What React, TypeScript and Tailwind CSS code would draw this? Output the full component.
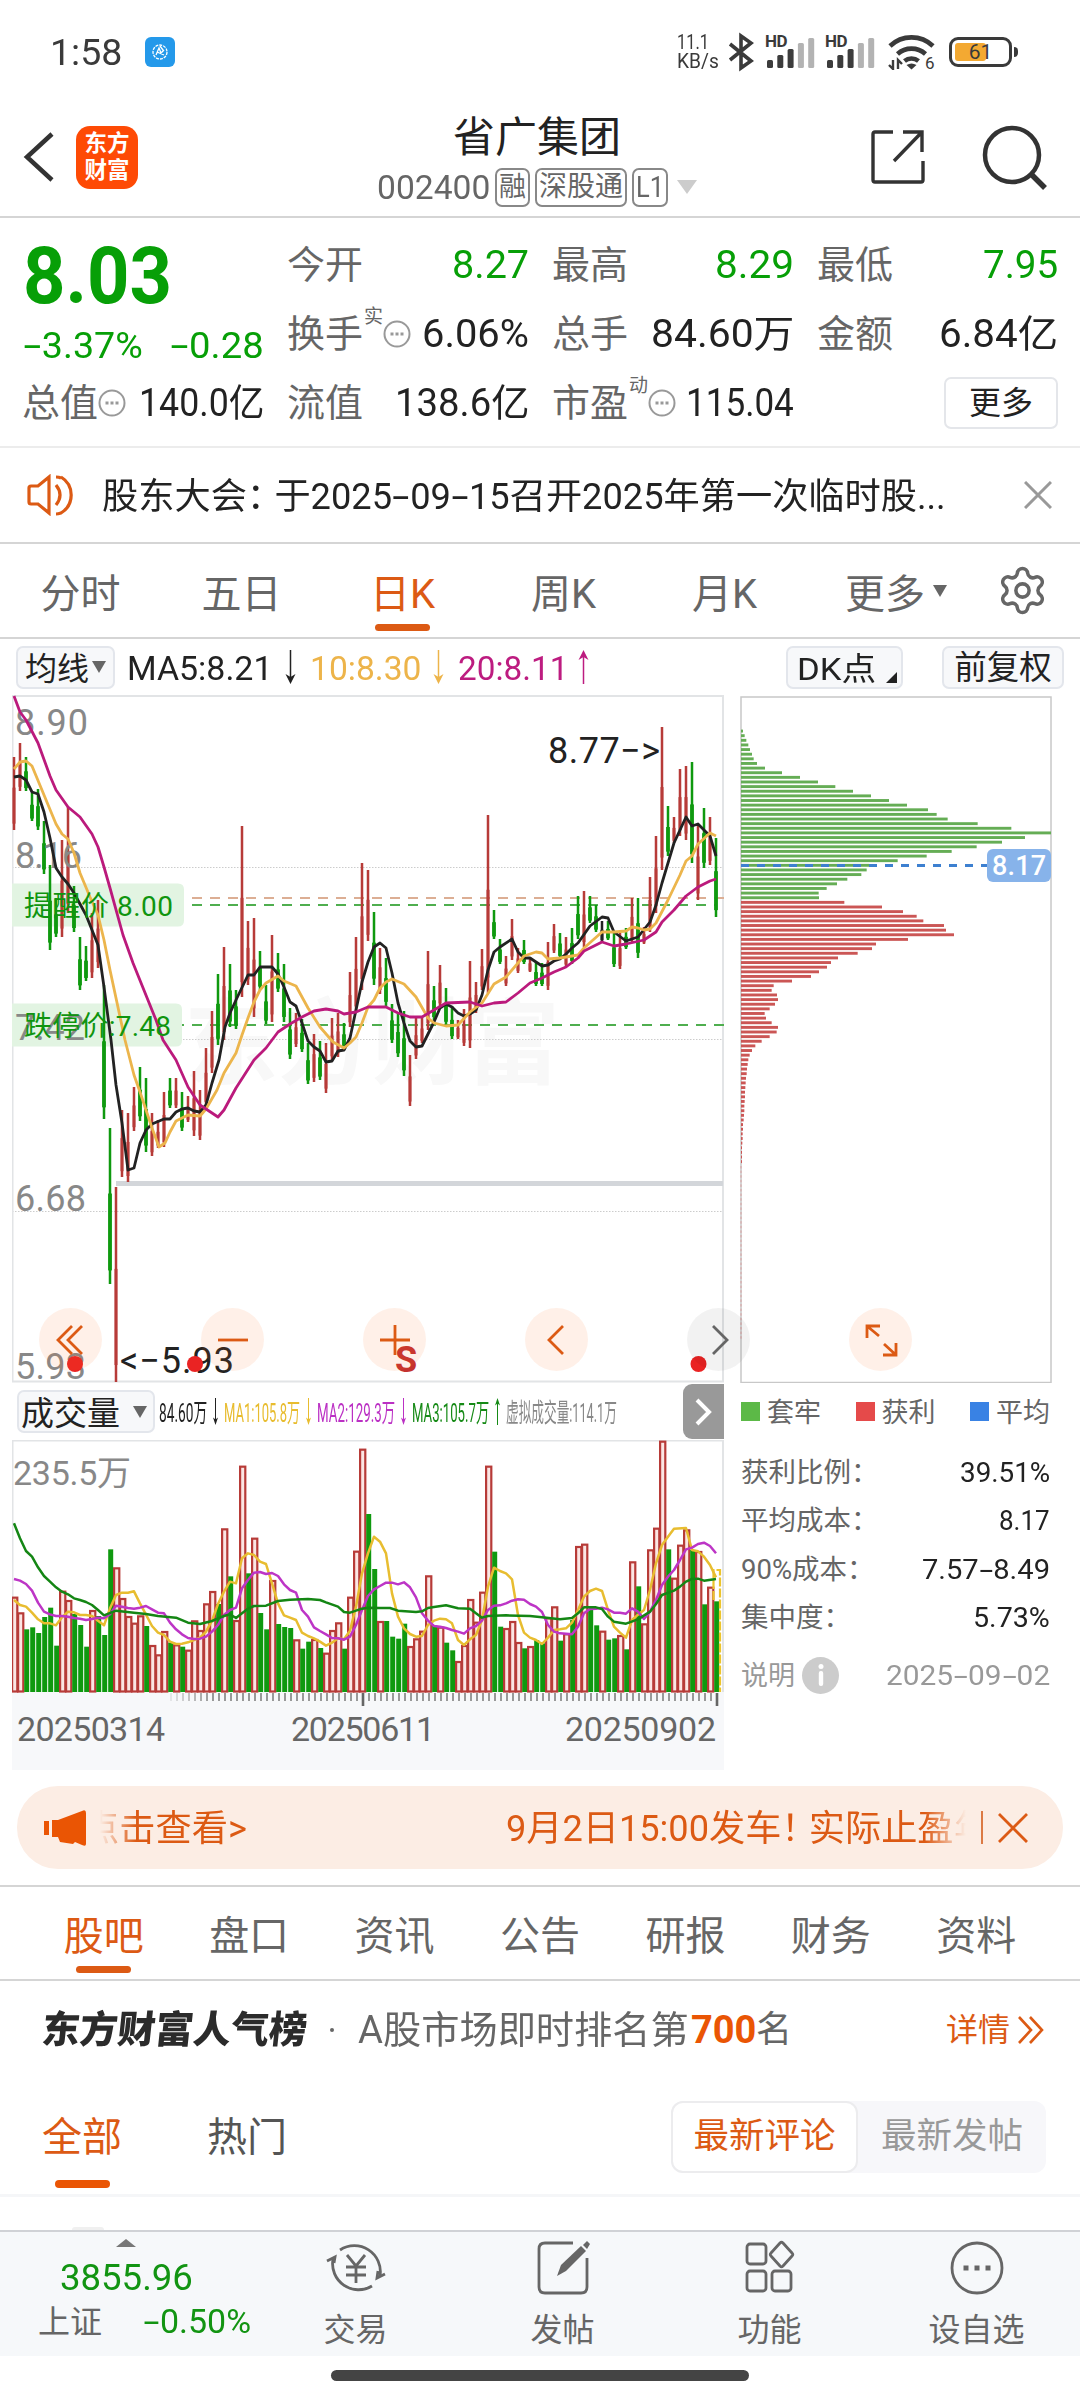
import { useLayoutEffect, useRef, useState } from "react";
import type { ReactNode } from "react";
import { Settings } from "lucide-react";

type Child = { children?: ReactNode };

/* Single line of text squeezed or stretched to a fixed width. */
function Fit({ w, text, className = "" }: { w: number; text: string; className?: string }) {
  const ref = useRef<HTMLSpanElement>(null);
  const [k, setK] = useState(1);
  useLayoutEffect(() => {
    if (ref.current) setK(w / ref.current.offsetWidth);
  }, [w, text]);
  const parts = text.split(/([-：！])/);
  return (
    <span className={`inline-block shrink-0 whitespace-nowrap ${className}`} style={{ width: w }}>
      <span ref={ref} className="inline-block origin-left" style={{ transform: `scaleX(${k})` }}>
        {parts.map((p, i) =>
          p === "-" ? (
            <span key={i} className="inline-block w-[0.5em] scale-x-[1.7] text-center">-</span>
          ) : p === "：" || p === "！" ? (
            <span key={i} className="inline-block w-[0.76em]">{p}</span>
          ) : (
            <span key={i}>{p}</span>
          ),
        )}
      </span>
    </span>
  );
}

/* ---------- market data ---------- */

type Candle = [string, number, number];
const candles: Candle[] = [
  ["r", 757, 830], ["r", 743, 791], ["g", 757, 791], ["g", 793, 821], ["g", 789, 830], ["g", 821, 874], ["g", 865, 950], ["g", 898, 937],
  ["r", 840, 937], ["r", 807, 913], ["g", 886, 932], ["g", 937, 990], ["g", 946, 981], ["r", 913, 978], ["r", 900, 968], ["g", 985, 1119],
  ["g", 1128, 1284], ["r", 1187, 1382], ["r", 1110, 1177], ["r", 1113, 1182], ["r", 1087, 1131], ["g", 1067, 1121], ["g", 1078, 1152], ["r", 1113, 1156],
  ["r", 1120, 1148], ["r", 1092, 1147], ["g", 1078, 1108], ["r", 1078, 1108], ["g", 1092, 1131], ["r", 1096, 1122], ["r", 1071, 1136], ["r", 1090, 1140],
  ["r", 1048, 1107], ["r", 1011, 1073], ["g", 974, 1045], ["r", 947, 1040], ["g", 964, 1027], ["g", 990, 1029], ["r", 826, 997], ["r", 921, 985],
  ["r", 918, 1017], ["g", 951, 990], ["g", 985, 1024], ["r", 935, 1022], ["g", 953, 992], ["g", 964, 1022], ["g", 1008, 1059], ["r", 1013, 1047],
  ["g", 1019, 1052], ["g", 1043, 1084], ["r", 1034, 1082], ["g", 1041, 1080], ["r", 1043, 1093], ["r", 1018, 1060], ["r", 1013, 1057], ["g", 1023, 1050],
  ["r", 972, 1027], ["r", 937, 1013], ["r", 863, 990], ["r", 870, 941], ["g", 912, 985], ["r", 948, 994], ["g", 958, 1006], ["g", 1004, 1043],
  ["g", 1014, 1057], ["g", 1011, 1076], ["r", 1055, 1106], ["r", 1018, 1059], ["r", 1018, 1043], ["r", 951, 1030], ["g", 986, 1020], ["r", 965, 1007],
  ["g", 988, 1025], ["g", 1006, 1039], ["r", 1020, 1039], ["r", 1009, 1046], ["r", 961, 1048], ["r", 982, 1013], ["r", 949, 990], ["r", 815, 993],
  ["g", 910, 939], ["g", 939, 964], ["r", 956, 986], ["r", 919, 960], ["r", 948, 973], ["g", 940, 964], ["r", 957, 972], ["g", 962, 986],
  ["g", 963, 986], ["r", 942, 990], ["r", 924, 953], ["g", 933, 958], ["r", 937, 967], ["g", 928, 964], ["g", 896, 939], ["r", 891, 947],
  ["g", 896, 923], ["g", 905, 932], ["k", 921, 942], ["g", 921, 940], ["g", 933, 967], ["r", 933, 969], ["g", 928, 949], ["r", 898, 943],
  ["g", 898, 958], ["r", 927, 944], ["r", 877, 932], ["r", 836, 913], ["r", 727, 870], ["g", 806, 856], ["r", 817, 843], ["r", 769, 836],
  ["r", 766, 840], ["g", 762, 863], ["r", 825, 900], ["g", 808, 868], ["r", 817, 865], ["g", 838, 917],
];

const ma5 =
  "14,777 20,776 26,780 32,792 38,794 44,812 50,838 56,868 62,877 68,884 74,893 86,915 98,945 104,987 111,1040 116,1085 122,1123 128,1170 134,1168 140,1143 146,1130 152,1124 164,1119 170,1119 176,1112 182,1109 188,1108 194,1111 200,1112 206,1105 212,1083 219,1060 225,1027 230,1013 236,1000 248,975 254,975 260,967 272,967 278,974 284,987 290,1002 296,1006 302,1023 308,1041 314,1047 320,1051 326,1062 332,1061 338,1051 344,1050 350,1038 356,1010 362,982 368,962 374,947 380,943 386,948 392,973 398,1003 404,1023 410,1041 416,1047 422,1046 428,1034 434,1022 440,1008 446,1004 452,1007 458,1013 464,1016 470,1014 476,1010 482,995 488,970 494,952 500,947 512,939 518,952 524,958 530,958 536,962 542,966 548,965 554,961 560,959 566,954 572,948 578,943 590,926 602,917 608,918 614,932 626,941 638,937 650,922 656,905 662,883 674,843 686,817 692,826 698,824 710,836 716,856";
const ma10 =
  "14,769 20,762 26,761 32,766 44,795 56,824 62,834 68,839 74,853 80,873 90,897 98,915 104,940 110,970 125,1040 134,1075 140,1092 146,1110 152,1128 159,1147 165,1143 170,1132 176,1121 188,1115 200,1116 206,1109 217,1090 224,1073 236,1053 242,1035 248,1018 254,1002 260,990 266,983 278,976 284,981 296,986 308,1008 320,1027 333,1042 344,1048 350,1043 356,1037 362,1023 368,1007 374,1000 380,988 386,982 392,979 404,984 416,997 428,1018 434,1023 446,1026 458,1025 470,1012 482,1003 494,984 506,977 524,956 536,952 542,953 548,959 560,958 578,955 584,948 602,932 614,932 626,931 632,927 638,928 644,930 650,929 656,923 668,900 680,875 686,861 692,856 698,844 710,833 716,836";
const ma20 =
  "14,696 20,712 26,720 38,743 50,776 56,790 68,807 80,817 92,834 98,847 104,867 110,888 123,935 133,963 156,1020 163,1040 176,1060 188,1087 200,1105 218,1117 224,1110 236,1088 254,1060 266,1048 278,1032 290,1024 302,1017 314,1011 326,1009 338,1011 344,1014 356,1012 368,1007 386,1007 398,1013 410,1017 422,1017 434,1010 446,1003 470,1002 482,1006 494,1003 506,1002 518,993 530,983 542,978 554,972 566,967 578,958 584,951 602,942 614,946 626,944 644,940 656,932 662,922 674,910 686,896 698,887 704,884 710,881 716,879";

/* Volume bars: colour and top edge, in thirds of a pixel. */
const volumes =
  "r650 r697 g748 g742 g759 g711 g683 g797 r632 r660 g702 g735 g800 r690 g708 g765 g508 r562 r654 r708 r728 r706 g738 r795 r823 r753 g788 r793 g800 r809 r721 r750 r670 r633 g672 r445 g589 r720 r257 g580 r473 g699 g748 r600 g732 g741 g744 r778 g806 g785 r777 g804 r818 r750 r727 g806 r650 r512 r206 g402 g567 r723 g723 g770 g776 g731 r798 r775 r752 r586 g737 r740 g788 g811 r843 r795 r657 r725 r635 r257 g515 g740 r744 r723 r786 g805 r798 g780 g790 r712 r679 g782 r760 g720 r498 r491 g690 g736 r752 g779 g775 r765 g808 r544 g619 r730 r508 r443 r182 g508 r593 r494 r448 g510 r513 g673 r620 g664".split(" ");

const vol1 =
  "42,660 60,675 78,680 96,698 114,718 132,730 150,730 168,736 186,712 204,695 222,697 240,705 258,705 276,708 294,722 312,736 330,685 348,645 366,638 384,638 402,634 420,670 438,704 456,738 474,758 492,765 510,785 528,792 546,791 564,787 582,780 600,773 618,755 636,722 654,672 672,635 690,605 708,610 726,535 744,520 762,525 780,545 798,552 816,610 834,670 852,706 870,713 888,720 906,758 924,768 942,775 960,785 978,797 996,788 1014,775 1032,778 1050,752 1068,680 1086,580 1104,520 1122,470 1140,485 1158,520 1176,640 1194,710 1212,745 1230,762 1248,770 1266,768 1284,735 1302,722 1320,716 1338,718 1356,730 1374,780 1392,795 1410,778 1428,765 1446,720 1464,620 1482,563 1500,573 1518,580 1536,598 1554,705 1572,758 1590,773 1608,780 1626,792 1644,773 1662,750 1680,748 1698,745 1716,728 1734,690 1752,650 1770,633 1788,626 1806,633 1824,690 1842,740 1860,758 1878,773 1896,720 1914,704 1932,690 1950,630 1968,550 1986,495 2004,470 2022,446 2058,444 2076,510 2094,514 2112,530 2130,555 2148,592";
const vol2 =
  "42,597 60,602 78,612 96,632 114,668 132,695 150,703 168,708 186,708 204,710 222,714 240,716 258,720 276,717 294,713 312,715 330,703 348,677 366,680 384,684 402,686 420,683 438,678 456,688 474,698 492,700 510,728 528,748 546,763 564,774 582,777 600,776 618,770 636,755 654,735 672,705 690,690 708,683 726,625 744,600 762,578 780,576 798,582 816,579 834,588 852,613 870,630 888,638 906,690 924,710 942,742 960,753 978,763 996,774 1014,775 1032,779 1050,770 1068,735 1086,690 1104,648 1122,628 1140,618 1158,608 1176,608 1194,613 1212,607 1230,622 1248,652 1266,700 1284,722 1302,738 1320,740 1338,744 1356,750 1374,755 1392,761 1410,745 1428,738 1446,722 1464,690 1482,677 1500,676 1518,670 1536,662 1554,658 1572,659 1590,672 1608,680 1626,696 1644,735 1662,755 1680,760 1716,763 1734,740 1752,700 1770,687 1788,686 1806,683 1824,688 1842,698 1860,698 1878,701 1896,685 1914,695 1932,717 1950,695 1968,660 1986,615 2004,590 2022,570 2040,540 2058,508 2076,503 2094,492 2112,488 2130,498 2148,520";
const vol3 =
  "42,430 60,475 78,513 96,530 114,562 132,588 150,605 168,622 186,635 204,643 222,655 240,660 258,666 276,675 294,690 312,706 348,692 402,698 438,702 474,708 528,713 564,728 600,732 636,723 654,715 672,708 690,703 708,714 726,700 744,686 762,678 798,677 834,663 870,659 924,657 960,660 978,667 1014,680 1032,696 1050,698 1086,686 1104,683 1140,684 1170,684 1194,692 1248,696 1266,694 1284,684 1302,681 1338,676 1374,685 1410,686 1428,700 1446,713 1464,708 1518,706 1590,708 1626,712 1680,718 1716,714 1734,700 1752,682 1788,682 1806,687 1824,710 1842,725 1878,731 1914,718 1950,695 1968,672 1986,645 2022,632 2040,620 2058,605 2076,597 2094,596 2112,602 2148,597";

/* Chip distribution, bar lengths in thirds of a pixel. */
const trapped = [6, 11, 16, 22, 27, 33, 38, 48, 72, 123, 177, 231, 283, 336, 390, 444, 498, 561, 587, 620, 710, 811, 930, 852, 783, 707, 632, 557, 470, 385, 377, 361, 319, 288, 257, 233, 234];
const profit = [310, 423, 486, 527, 547, 609, 615, 639, 501, 405, 393, 350, 291, 270, 258, 234, 210, 153, 98, 92, 108, 111, 102, 86, 71, 75, 92, 111, 107, 86, 62, 43, 33, 26, 22, 20, 18, 17, 15, 14, 13, 12, 12, 11, 10, 10, 9, 8, 6, 6, 5, 5, 4, 3, 3, 3, 3];

const RED = "#b73b38";
const GREEN = "#0f990f";

/* ---------- status bar ---------- */

function Signal() {
  const bars = [8, 13, 19, 25, 30];
  return (
    <span className="relative block h-[34px] w-[50px]">
      <span className="absolute left-0 top-[-2px] text-[17px] font-bold leading-none tracking-tight">HD</span>
      <svg className="absolute left-[2px] top-[2px]" width="48" height="31">
        {bars.map((h, i) => (
          <rect key={i} x={i * 10.3} y={31 - h} width="6" height={h} rx="1.500" fill={i < 3 ? "#3c3c3c" : "#b3b3b3"} />
        ))}
      </svg>
    </span>
  );
}

function StatusBar() {
  return (
    <div className="flex h-[104px] items-center pl-[50px] pr-[68px] text-[#3a3a3a]">
      <Fit w={72} text="1:58" className="text-[37px] leading-none" />
      <span className="ml-[23px] flex h-[30px] w-[30px] items-center justify-center rounded-[6px] bg-[#2499ea]">
        <svg width="18" height="18" viewBox="0 0 18 18" fill="none" stroke="#fff" strokeWidth="1.3">
          <circle cx="9" cy="9" r="7" strokeDasharray="3 1" />
          <path d="M5 12l3-7 2 5 3-3M6 9l7 3M9 3l3 4" />
        </svg>
      </span>
      <span className="ml-auto flex w-[42px] flex-col text-[21px] leading-[19px]">
        <Fit w={32} text="11.1" />
        <Fit w={42} text="KB/s" />
      </span>
      <svg className="ml-[9px]" width="26" height="40" viewBox="0 0 26 40" fill="none" stroke="#3a3a3a" strokeWidth="3.6">
        <path d="M2 12L23 29L13 36V4L23 11L2 28" />
      </svg>
      <span className="ml-[11px]"><Signal /></span>
      <span className="ml-[10px]"><Signal /></span>
      <svg className="ml-[13px]" width="48" height="36" viewBox="0 0 48 36" fill="none" stroke="#3a3a3a" strokeWidth="4.6">
        <path d="M2 12a31 31 0 0 1 43 0" />
        <path d="M9.500 20a21 21 0 0 1 28 0" />
        <path d="M16.500 27a11 11 0 0 1 14 0" />
        <path d="M18.500 31q5-3 10 0l-5 4.500z" fill="#3a3a3a" stroke="none" />
        <path d="M5 26v9l-4-4M10 35v-9l4 4" strokeWidth="2.400" />
        <text x="37" y="35" fontSize="17" fill="#3a3a3a" stroke="none">6</text>
      </svg>
      <span className="relative ml-[13px] flex h-[30px] w-[63px] items-center rounded-[9px] border-[3px] border-[#3a3a3a] p-[3px]">
        <span className="h-full w-[31px] rounded-[3px] bg-[#f3a932]" />
        <span className="absolute inset-0 flex items-center justify-center text-[21px] leading-none">61</span>
        <span className="absolute -right-[9px] top-[7px] h-[10px] w-[4px] rounded-r bg-[#3a3a3a]" />
      </span>
    </div>
  );
}

/* ---------- header ---------- */

function Tag({ children }: Child) {
  return (
    <span className="flex h-[39px] shrink-0 items-center justify-center whitespace-nowrap rounded-[7px] border-2 border-[#888] px-[2px] text-[28px] leading-none text-[#666]">
      {children}
    </span>
  );
}

function Header() {
  return (
    <header className="flex h-[114px] items-center border-b-2 border-[#d5d5d5]">
      <svg className="-mt-[6px] ml-[22px] shrink-0" width="34" height="52" viewBox="0 0 34 52" fill="none" stroke="#333" strokeWidth="4.500">
        <path d="M30 3L5 26L30 49" />
      </svg>
      <div className="-mt-[6px] ml-[20px] flex h-[63px] w-[62px] shrink-0 flex-col items-center justify-center rounded-[14px] bg-[#fe4a05] text-[22.5px] font-bold leading-[27px] text-white">
        <span>东方</span>
        <span>财富</span>
      </div>
      <div className="ml-[240px] flex w-[318px] flex-col items-center">
        <span className="mt-px text-[42px] leading-[46px] text-[#222]">省广集团</span>
        <span className="mt-[7px] flex items-center gap-[5px] text-[#666]">
          <Fit w={113} text="002400" className="text-[33px] leading-none" />
          <Tag><span className="text-[27px]">融</span></Tag>
          <Tag>深股通</Tag>
          <Tag><Fit w={28} text="L1" className="text-[30px]" /></Tag>
          <svg className="ml-[4px] shrink-0" width="20" height="14"><path d="M0 0h20l-10 14z" fill="#ccc" /></svg>
        </span>
      </div>
      <svg className="-mt-[8px] ml-[173px] shrink-0" width="56" height="56" viewBox="0 0 56 56" fill="none" stroke="#333" strokeWidth="3.400">
        <path d="M24 4H6q-2 0-2 2v46q0 2 2 2h46q2 0 2-2V33" />
        <path d="M34 4h19v20M53 4L25 33" />
      </svg>
      <svg className="-mt-[4px] ml-[57px] shrink-0" width="66" height="66" viewBox="0 0 66 66" fill="none" stroke="#333" strokeWidth="4.500">
        <circle cx="30" cy="30" r="27" />
        <path d="M49 49l14 14" strokeWidth="5.500" />
      </svg>
    </header>
  );
}

/* ---------- quote ---------- */

function Dots() {
  return (
    <svg className="shrink-0" width="28" height="28" viewBox="0 0 28 28" fill="none" stroke="#999" strokeWidth="2">
      <circle cx="14" cy="14" r="12.500" />
      <path d="M7.500 14h3M12.500 14h3M17.500 14h3" strokeWidth="3" />
    </svg>
  );
}

function Stat({ label, value, w, green, sup, dots }: { label: string; value: string; w: number; green?: boolean; sup?: string; dots?: boolean }) {
  return (
    <div className="flex h-[69px] items-center leading-none">
      <span className="-ml-[2px] text-[38px] text-[#666]">{label}</span>
      {sup && <span className="-mt-[34px] w-[20px] pl-px text-[19px] text-[#666]">{sup}</span>}
      {dots && <Dots />}
      <Fit w={w} text={value} className={green ? "ml-auto text-[38px] text-[#079f07]" : "ml-auto text-[38px] text-[#222]"} />
    </div>
  );
}

function Quote() {
  return (
    <section className="grid h-[230px] grid-cols-[240px_240px_240px_239px] content-start gap-x-[25px] border-b-2 border-[#ececec] pl-[24px] pt-[12px]">
      <div className="row-span-2 flex flex-col leading-none text-[#079f07]">
        <Fit w={149} text="8.03" className="-ml-px mt-[7px] text-[79px] font-bold" />
        <div className="-ml-px mt-[11px] flex justify-between text-[37px]">
          <Fit w={120} text="-3.37%" />
          <Fit w={94} text="-0.28" />
        </div>
      </div>
      <Stat label="今开" value="8.27" w={77} green />
      <Stat label="最高" value="8.29" w={79} green />
      <Stat label="最低" value="7.95" w={75} green />
      <Stat label="换手" value="6.06%" w={107} sup="实" dots />
      <Stat label="总手" value="84.60万" w={143} />
      <Stat label="金额" value="6.84亿" w={119} />
      <Stat label="总值" value="140.0亿" w={125} dots />
      <Stat label="流值" value="138.6亿" w={134} />
      <Stat label="市盈" value="115.04" w={108} sup="动" dots />
      <div className="flex h-[69px] items-center justify-end">
        <span className="flex h-[52px] w-[114px] items-center justify-center rounded-[7px] border-2 border-[#e4e6ea] text-[32px] leading-none text-[#222]">更多</span>
      </div>
    </section>
  );
}

function Notice() {
  return (
    <section className="flex h-[96px] items-center border-b-2 border-[#d5d5d5] pl-[26px] pr-[28px]">
      <svg width="50" height="42" viewBox="0 0 50 42" fill="none" stroke="#dc5a14" strokeWidth="3.200">
        <path d="M23 3L12 12H5q-2 0-2 2v14q0 2 2 2h7l11 9z" />
        <path d="M30 11q8 10 0 20M35 3a21 21 0 0 1 0 36q-3 1-5 1M30 3q3 0 5 1" />
      </svg>
      <Fit w={844} text="股东大会：于2025-09-15召开2025年第一次临时股..." className="ml-[26px] mt-[3px] text-[36px] leading-none text-[#222]" />
      <svg className="ml-auto" width="28" height="28" viewBox="0 0 28 28" stroke="#999" strokeWidth="3">
        <path d="M1 1l26 26M27 1L1 27" />
      </svg>
    </section>
  );
}

function Period({ children, active }: Child & { active?: boolean }) {
  return (
    <span className={active ? "relative flex h-full w-[161px] items-center justify-center pt-[8px] text-[#dc5a14]" : "relative flex h-full w-[161px] items-center justify-center pt-[8px]"}>
      {children}
      {active && <span className="absolute bottom-[6px] h-[7px] w-[55px] rounded-full bg-[#dc5a14]" />}
    </span>
  );
}

function Periods() {
  return (
    <nav className="flex h-[95px] items-center border-b-2 border-[#d5d5d5] text-[40px] leading-none text-[#666]">
      <Period>分时</Period>
      <Period>五日</Period>
      <Period active>日K</Period>
      <Period>周K</Period>
      <Period>月K</Period>
      <span className="ml-[40px] flex items-center pt-[8px]">
        更多
        <svg className="-mt-[8px] ml-[8px]" width="14" height="12"><path d="M0 0h14l-7 12z" fill="#666" /></svg>
      </span>
      <Settings className="ml-[49px]" size={53} strokeWidth={1.6} color="#666" />
    </nav>
  );
}

/* ---------- price chart ---------- */

function Arrow({ color, up }: { color: string; up?: boolean }) {
  return (
    <svg className={up ? "rotate-180" : ""} width="13" height="34" viewBox="0 0 13 34" fill="none" stroke={color} strokeWidth="1.500">
      <path d="M6.500 0V31" />
      <path d="M6.500 34l-5-10 5 3 5-3z" fill={color} stroke="none" />
    </svg>
  );
}

function ThinArrow({ color, up }: { color: string; up?: boolean }) {
  return (
    <span className="flex w-[17px] shrink-0 justify-center">
      <svg className={up ? "rotate-180" : ""} width="7" height="27" viewBox="0 0 7 27" fill="none" stroke={color}>
        <path d="M3.500 0V25" />
        <path d="M3.500 27L1 19.500l2.500 2 2.500-2z" fill={color} stroke="none" />
      </svg>
    </span>
  );
}

function ChartToolbar() {
  return (
    <div className="flex h-[56px] items-center pl-[16px] pr-[16px] text-[33px] leading-none">
      <span className="flex h-[43px] w-[99px] items-center rounded-[7px] border-2 border-[#e3e6ec] bg-[#f7f8fa] pl-[7px] pt-[3px] text-[32px] text-[#222]">
        均线
        <svg className="-mt-[3px] ml-[3px]" width="14" height="12"><path d="M0 0h14l-7 12z" fill="#666" /></svg>
      </span>
      <Fit w={146} text="MA5:8.21" className="ml-[12px] mt-[3px] text-[#222]" />
      <span className="ml-[11px]"><Arrow color="#222" /></span>
      <Fit w={111} text="10:8.30" className="ml-[13px] mt-[3px] text-[#edb44a]" />
      <span className="ml-[11px]"><Arrow color="#edb44a" /></span>
      <Fit w={110} text="20:8.11" className="ml-[13px] mt-[3px] text-[#bd1c80]" />
      <span className="ml-[9px]"><Arrow color="#bd1c80" up /></span>
      <span className="relative ml-auto flex h-[43px] w-[117px] items-center rounded-[7px] border-2 border-[#e3e6ec] bg-[#f7f8fa] pl-[9px] pt-[3px] text-[32px] text-[#222]">
        <Fit w={79} text="DK点" />
        <svg className="absolute bottom-[4px] right-[4px]" width="11" height="11"><path d="M11 0v11H0z" fill="#222" /></svg>
      </span>
      <span className="ml-[39px] flex h-[43px] w-[122px] items-center justify-center rounded-[7px] border-2 border-[#e3e6ec] bg-[#f7f8fa] pt-[3px] text-[32.500px] text-[#222]">前复权</span>
    </div>
  );
}

function PriceChart() {
  return (
    <svg className="block" width="712" height="688" viewBox="12 695 712 688">
      <text x="184" y="1077" fontSize="94" fontWeight="700" textLength="376" fill="#f8f8f8">东方财富</text>
      <path d="M12 867.500H724M12 1039.500H724M12 1211.500H724" stroke="#ccc" strokeDasharray="1.500 1.500" />
      <path d="M12.500 1382V696H723V1381.500H12" fill="none" stroke="#e2e4e6" strokeWidth="2" />
      <path d="M12 898H724" stroke="#dcae94" strokeWidth="1.800" strokeDasharray="10 8" />
      <path d="M12 905H716M12 1025H724" stroke="#4fae4f" strokeWidth="1.800" strokeDasharray="10 8" />
      <path d="M116 1183.500H723" stroke="#d3d6da" strokeWidth="5" />
      <path d="M12 883.500h166q6 0 6 6v31q0 6-6 6H12zM12 1003.500h164q6 0 6 6v31q0 6-6 6H12z" fill="#e2f4e2" />
      {candles.map(([c, t, b], i) => {
        const color = c === "r" ? RED : c === "g" ? GREEN : "#222";
        const x = 14 + i * 6;
        const mid = t + (b - t) * 0.42;
        const body = c === "g" ? 3.8 : 3;
        return (
          <g key={i} fill={color}>
            <rect x={x - 1.250} y={t} width={2.500} height={b - t} />
            <rect x={x - body / 2} y={mid} width={body} height={(b - mid) * 0.85} />
          </g>
        );
      })}
      <g fontSize="36" fill="#888">
        <text x="15" y="735" textLength="73">8.90</text>
        <text x="15" y="868" textLength="67">8.16</text>
        <text x="15" y="1040" textLength="70">7.42</text>
        <text x="15" y="1211" textLength="71">6.68</text>
        <text x="15" y="1379" textLength="71">5.93</text>
      </g>
      <g fill="none" strokeWidth="2.800" strokeLinejoin="round">
        <polyline points={ma5} stroke="#222" />
        <polyline points={ma10} stroke="#ecb54c" />
        <polyline points={ma20} stroke="#bb1a7c" />
      </g>
      <g fontSize="28" fill="#0f950f">
        <text x="24" y="916" textLength="149">提醒价 8.00</text>
        <text x="24" y="1036" textLength="147">跌停价:7.48</text>
      </g>
      <g fontSize="36" fill="#222">
        <text x="548" y="763" textLength="112">8.77−&gt;</text>
        <text x="120" y="1373" textLength="114">&lt;−5.93</text>
      </g>
      <g fill="#ea2323">
        <circle cx="75" cy="1364" r="8" />
        <circle cx="195" cy="1364" r="8" />
        <circle cx="698.500" cy="1364" r="8" />
      </g>
      <text x="395" y="1372" fontSize="36" fontWeight="700" fill="#c4322f">S</text>
    </svg>
  );
}

function ChipChart() {
  return (
    <svg className="ml-[16px] block" width="312" height="688" viewBox="740 695 312 688">
      <rect x="741" y="697" width="310" height="685.500" fill="none" stroke="#c8c8c8" strokeWidth="1.500" />
      <g fill="#65ad55">
        {trapped.map((w, i) => <rect key={i} x="741" y={729.600 + i * 4.630} width={w / 3} height="2.900" />)}
      </g>
      <g fill="#cb5655">
        {profit.map((w, i) => <rect key={i} x="741" y={729.600 + (i + 37) * 4.630} width={w / 3} height="2.900" />)}
      </g>
      <path d="M741 1166V1340" stroke="#d9a0a0" strokeDasharray="2.500 2.100" />
      <path d="M741 865.500H987" stroke="#3d80d0" strokeWidth="3" strokeDasharray="8 8" />
      <rect x="987" y="849" width="64" height="33" rx="6" fill="#87b3ea" />
      <text x="992" y="875" fontSize="27" fontWeight="500" textLength="54" fill="#fff">8.17</text>
    </svg>
  );
}

function RoundButton({ gray, children }: Child & { gray?: boolean }) {
  return (
    <span className={gray ? "flex h-[63px] w-[63px] items-center justify-center rounded-full bg-black/5" : "flex h-[63px] w-[63px] items-center justify-center rounded-full bg-[#fe6a20]/10"}>
      <svg width="40" height="40" viewBox="0 0 40 40" fill="none" stroke={gray ? "#666" : "#dc5a14"} strokeWidth="2.800">
        {children}
      </svg>
    </span>
  );
}

function ChartButtons() {
  return (
    <div className="absolute left-[39px] top-[613px] flex gap-[99px]">
      <RoundButton><path d="M21 6L7 20l14 14M31 6L17 20l14 14" /></RoundButton>
      <RoundButton><path d="M5 20h30" /></RoundButton>
      <RoundButton><path d="M5 20h30M20 5v30" /></RoundButton>
      <RoundButton><path d="M26 6L12 20l14 14" /></RoundButton>
      <RoundButton gray><path d="M14 6l14 14-14 14" /></RoundButton>
      <RoundButton><path d="M6 18V6h13M6 6l12 10M35 23v12H22M35 35L23 24" /></RoundButton>
    </div>
  );
}

/* ---------- volume ---------- */

function VolumeToolbar() {
  return (
    <div className="flex h-[57px] w-[712px] items-center pl-[5px] text-[26px] leading-none">
      <span className="flex h-[43px] w-[138px] shrink-0 items-center rounded-[7px] border-2 border-[#e3e6ec] bg-[#f7f8fa] pl-[2px] pt-[3px] text-[33px] text-[#222]">
        成交量
        <svg className="-mt-[3px] ml-[13px]" width="14" height="12"><path d="M0 0h14l-7 12z" fill="#666" /></svg>
      </span>
      <Fit w={48} text="84.60万" className="ml-[4px] mt-[2px] text-[#222]" />
      <ThinArrow color="#222" />
      <Fit w={76} text="MA1:105.8万" className="mt-[2px] text-[#e8bc2e]" />
      <ThinArrow color="#e8bc2e" />
      <Fit w={78} text="MA2:129.3万" className="mt-[2px] text-[#bb30c4]" />
      <ThinArrow color="#bb30c4" />
      <Fit w={77} text="MA3:105.7万" className="mt-[2px] text-[#168a16]" />
      <ThinArrow color="#168a16" up />
      <Fit w={111} text="虚拟成交量:114.1万" className="mt-[2px] text-[#888]" />
      <span className="ml-auto flex h-[55px] w-[41px] items-center justify-center rounded-l-[9px] bg-[#999]">
        <svg width="20" height="28" viewBox="0 0 20 28" fill="none" stroke="#fff" strokeWidth="4"><path d="M3 2l12 12L3 26" /></svg>
      </span>
    </div>
  );
}

function VolumeChart() {
  return (
    <svg className="block bg-[linear-gradient(#fff_252px,#f7f8fa_252px)]" width="712" height="330" viewBox="12 1440 712 330">
      <path d="M12.500 1692V1440.500H723V1692" fill="none" stroke="#e2e4e6" strokeWidth="2" />
      <text x="13" y="1485" fontSize="34" fill="#888" textLength="118">235.5万</text>
      {volumes.map((v, i) => {
        const y = 1380 + Number(v.slice(1)) / 3;
        const x = 14.7 + i * 6;
        return v[0] === "g" ? (
          <rect key={i} x={x - 2.500} y={y} width="5" height={1692 - y} fill={GREEN} />
        ) : (
          <rect key={i} x={x - 2.600} y={y + 1} width="5.200" height={1690.500 - y} fill="#fbe6e4" stroke={RED} strokeWidth="2.200" />
        );
      })}
      <path d="M713.500 1600V1570h6.500V1692" fill="none" stroke="#ecc42c" strokeWidth="2.200" strokeDasharray="9 2" />
      <g transform="translate(0 1380) scale(.33333)" fill="none" strokeWidth="7.500" strokeLinejoin="round">
        <polyline points={vol1} stroke="#e8bd30" />
        <polyline points={vol2} stroke="#bd35c6" />
        <polyline points={vol3} stroke="#148614" />
      </g>
      {Array.from({ length: 92 }, (_, i) => (
        <rect key={i} x={170 + i * 6} y="1693" width="2" height="8" fill="#999" opacity={Math.min(1, 0.2 + i * 0.12)} />
      ))}
      <path d="M363 1693v13M717 1693v13" stroke="#666" strokeWidth="2.600" />
      <g fontSize="34" fill="#666">
        <text x="17" y="1741" textLength="148">20250314</text>
        <text x="291" y="1741" textLength="144">20250611</text>
        <text x="565" y="1741" textLength="151">20250902</text>
      </g>
    </svg>
  );
}

function Legend({ color, children }: Child & { color: string }) {
  return (
    <span className="flex items-center gap-[7px]">
      <span className={`h-[19px] w-[19px] ${color}`} />
      <span className="pt-[3px]">{children}</span>
    </span>
  );
}

function InfoRow({ label, value, w }: { label: string; value: string; w: number }) {
  return (
    <div className="flex h-[48.500px] items-center justify-between">
      <span className="text-[#666]">{label}</span>
      <Fit w={w} text={value} className="text-[#222]" />
    </div>
  );
}

function ChipPanel() {
  return (
    <div className="ml-[17px] w-[309px] text-[27.500px] leading-none">
      <div className="flex h-[57px] items-center justify-between text-[27px] text-[#666]">
        <Legend color="bg-[#5cb947]">套牢</Legend>
        <Legend color="bg-[#e54a4a]">获利</Legend>
        <Legend color="bg-[#3982e4]">平均</Legend>
      </div>
      <div className="pt-[8px]">
        <InfoRow label="获利比例：" value="39.51%" w={90} />
        <InfoRow label="平均成本：" value="8.17" w={51} />
        <InfoRow label="90%成本：" value="7.57-8.49" w={128} />
        <InfoRow label="集中度：" value="5.73%" w={77} />
      </div>
      <div className="mt-[14px] flex h-[38px] items-center text-[#999]">
        <span className="pt-[2px] text-[27px]">说明</span>
        <span className="ml-[7px] flex h-[37px] w-[37px] items-center justify-center rounded-full bg-[#ccc] text-white">
          <svg width="10" height="22" viewBox="0 0 10 22" fill="#fff"><circle cx="5" cy="2.500" r="2.500" /><rect x="2.800" y="7" width="4.400" height="15" rx="2" /></svg>
        </span>
        <Fit w={164} text="2025-09-02" className="ml-auto mt-[2px]" />
      </div>
    </div>
  );
}

/* ---------- lower sections ---------- */

function Promo() {
  return (
    <div className="mx-[17px] mt-[16px] flex h-[83px] items-center rounded-[41px] bg-[#fcede4] text-[36px] leading-none text-[#dc5a14]">
      <svg className="ml-[27px]" width="42" height="36" viewBox="0 0 42 36" fill="#ea5504">
        <path d="M0 11h5v14H0zM8 10h6L38 1q4-2 4 2v31q0 3-4 1l-7-3-2 2-13-2-2-5H8z" />
      </svg>
      <div className="ml-[14px] flex w-[868px] overflow-hidden whitespace-nowrap pt-[3px] [mask-image:linear-gradient(90deg,transparent,#000_36px,#000_825px,transparent_866px)]">
        <span className="-ml-[17px] flex"><Fit w={164} text="点击查看>" /></span>
        <span className="ml-[259px]"><Fit w={448} text="9月2日15:00发车！实际止盈" /></span>
        <span>年</span>
      </div>
      <span className="ml-[13px] h-[33px] w-[2px] bg-[#dc7a44]" />
      <svg className="ml-[15px]" width="30" height="30" viewBox="0 0 30 30" stroke="#dc5a14" strokeWidth="2.800"><path d="M1 1l28 28M29 1L1 29" /></svg>
    </div>
  );
}

function Sections() {
  return (
    <nav className="mt-[16px] flex h-[96px] border-y-2 border-[#d5d5d5] px-[31px] text-[40px] leading-none text-[#666]">
      {["股吧", "盘口", "资讯", "公告", "研报", "财务", "资料"].map((t, i) => (
        <span key={t} className={i === 0 ? "relative flex flex-1 items-center justify-center pt-[8px] text-[#dc5a14]" : "relative flex flex-1 items-center justify-center pt-[8px]"}>
          {t}
          {i === 0 && <span className="absolute bottom-[6px] h-[7px] w-[55px] rounded-full bg-[#dc5a14]" />}
        </span>
      ))}
    </nav>
  );
}

function Rank() {
  return (
    <div className="flex h-[98px] items-center pl-[42px] pr-[35px] text-[38px] leading-none text-[#666]">
      <Fit w={265} text="东方财富人气榜" className="-skew-x-6 text-[38px] font-black text-[#2b2b2b]" />
      <span className="ml-[23px] h-[4px] w-[4px] rounded-full bg-[#666]" />
      <Fit w={331} text="A股市场即时排名第" className="ml-[24px]" />
      <Fit w={65} text="700" className="ml-[2px] text-[38px] font-bold text-[#ea5504]" />
      <span className="text-[36px]">名</span>
      <span className="ml-auto text-[32px] text-[#dc5a14]">详情</span>
      <svg className="ml-[7px]" width="28" height="30" viewBox="0 0 28 30" fill="none" stroke="#dc5a14" strokeWidth="2.600"><path d="M2 2l12 13L2 28M13 2l12 13-12 13" /></svg>
    </div>
  );
}

function Filter() {
  return (
    <div className="relative flex h-[118px] items-center border-b-[3px] border-[#f5f6f8] pl-[42px] pr-[34px] leading-none">
      <span className="pt-[2px] text-[40px] text-[#dc5a14]">全部</span>
      <span className="absolute bottom-[6px] left-[55px] h-[8px] w-[55px] rounded-full bg-[#ea5504]" />
      <span className="ml-[85px] pt-[2px] text-[40px] text-[#555]">热门</span>
      <div className="ml-auto flex h-[72px] w-[375px] rounded-[12px] bg-[#f7f7fa] text-[35.500px]">
        <span className="flex w-[187px] items-center justify-center rounded-[12px] border-2 border-[#ececee] bg-white text-[#dc5a14]">最新评论</span>
        <span className="flex flex-1 items-center justify-center text-[#999]">最新发帖</span>
      </div>
    </div>
  );
}

function NavItem({ label, children }: Child & { label: string }) {
  return (
    <div className="flex w-[207px] flex-col items-center pt-[8px] text-[32px] leading-none text-[#666]">
      <svg width="60" height="56" viewBox="0 0 60 56" fill="none" stroke="#666" strokeWidth="2.800">{children}</svg>
      <span className="mt-[18px]">{label}</span>
    </div>
  );
}

function BottomNav() {
  return (
    <div className="flex h-[126px] border-t-2 border-[#d0d2d6] bg-[#f6f8fa]">
      <div className="flex w-[252px] flex-col items-center leading-none text-[#129412]">
        <svg className="mt-[7px]" width="20" height="8"><path d="M10 0l10 8H0z" fill="#777" /></svg>
        <Fit w={133} text="3855.96" className="mt-[13px] text-[36px]" />
        <span className="mt-[9px] flex w-full items-center pl-[38px] text-[33px]">
          <span className="text-[32px] text-[#666]">上证</span>
          <Fit w={108} text="-0.50%" className="ml-[41px]" />
        </span>
      </div>
      <NavItem label="交易">
        <path d="M14 10A26 26 0 0 1 54 36M46 46A26 26 0 0 1 7 19" />
        <path d="M1 21l8-4-1 6M59 34l-8 4 1-7" />
        <path d="M21 15l9 11 9-11M20 27h20M20 35h20M30 26v17" />
      </NavItem>
      <NavItem label="发帖">
        <path d="M40 3H12q-6 0-6 6v38q0 6 6 6h36q6 0 6-6V18" />
        <path d="M24 36l4-11L48 6l5 5-20 20z" fill="#666" stroke="none" />
        <path d="M50 5l4-4 3 3-3 5z" fill="#666" stroke="none" />
      </NavItem>
      <NavItem label="功能">
        <rect x="7" y="4" width="19" height="20" rx="3" />
        <rect x="7" y="31" width="19" height="20" rx="3" />
        <rect x="32" y="31" width="19" height="20" rx="3" />
        <path d="M40 3q1.500-1.500 3 0l9 10q1.500 1.500 0 3l-9 10q-1.500 1.500-3 0l-9-10q-1.500-1.500 0-3z" />
      </NavItem>
      <NavItem label="设自选">
        <circle cx="30" cy="28" r="25" />
        <path d="M16.500 28h5M27.500 28h5M38.500 28h5" strokeWidth="5" />
      </NavItem>
    </div>
  );
}

export default function App() {
  return (
    <div className="h-[2400px] w-[1080px] overflow-hidden bg-white font-['Roboto','Noto_Sans_CJK_SC',sans-serif]">
      <StatusBar />
      <Header />
      <Quote />
      <Notice />
      <Periods />
      <ChartToolbar />
      <div className="relative flex pl-[12px]">
        <PriceChart />
        <ChipChart />
        <ChartButtons />
      </div>
      <div className="flex pl-[12px]">
        <div>
          <VolumeToolbar />
          <VolumeChart />
        </div>
        <ChipPanel />
      </div>
      <Promo />
      <Sections />
      <Rank />
      <Filter />
      <div className="flex h-[33px] items-end overflow-hidden pl-[72px]">
        <span className="h-[3px] w-[32px] rounded-t-full bg-[#f0f0f0]" />
      </div>
      <BottomNav />
      <div className="mx-auto mt-[14px] h-[11px] w-[418px] rounded-full bg-[#444]" />
    </div>
  );
}
